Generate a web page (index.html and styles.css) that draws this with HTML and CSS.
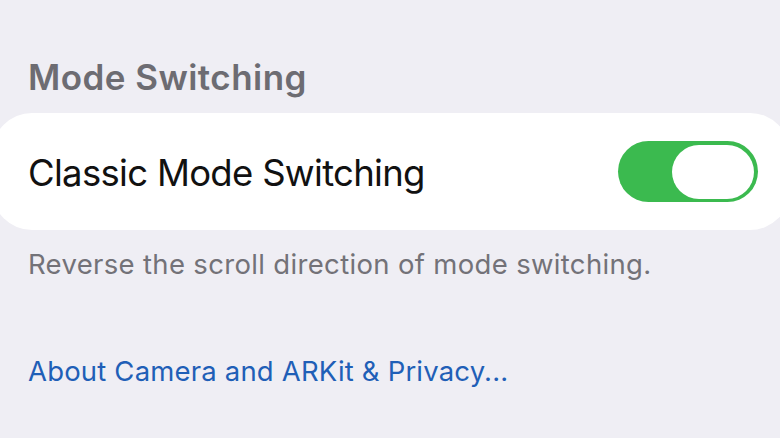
FILE: index.html
```html
<!DOCTYPE html>
<html>
<head>
<meta charset="utf-8">
<link rel="stylesheet" href="styles.css">
</head>
<body>
<div class="page">
  <h2 class="section-title">Mode Switching</h2>
  <div class="card">
    <span class="row-label">Classic Mode Switching</span>
    <div class="toggle"><div class="knob"></div></div>
  </div>
  <p class="footer-note">Reverse the scroll direction of mode switching.</p>
  <a class="privacy-link">About Camera and ARKit &amp; Privacy...</a>
</div>
</body>
</html>
```
FILE: styles.css
```css
html, body {
  margin: 0;
  padding: 0;
  background: #efeef4;
  overflow: hidden;
}
.page {
  width: 780px;
  height: 438px;
  font-family: Inter, "Noto Sans", sans-serif;
  display: flex;
  flex-direction: column;
  align-items: flex-start;
}
.section-title {
  margin: 53px 0 0 28px;
  font-size: 35px;
  line-height: 48px;
  font-weight: 600;
  letter-spacing: 0.45px;
  color: #6d6c72;
}
.card {
  margin: 12px 0 0 -8px;
  width: 798px;
  height: 117px;
  box-sizing: border-box;
  background: #ffffff;
  border-radius: 40px;
  display: flex;
  align-items: center;
  justify-content: space-between;
  padding: 0 32px 0 36px;
}
.row-label {
  font-size: 36.5px;
  line-height: 44px;
  padding-top: 2px;
  letter-spacing: -0.7px;
  color: #111;
  font-weight: 400;
}
.toggle {
  width: 140px;
  height: 61px;
  border-radius: 31px;
  background: #3bba4f;
  display: flex;
  align-items: center;
  justify-content: flex-end;
  padding: 0 4px;
  box-sizing: border-box;
}
.knob {
  width: 82px;
  height: 54px;
  border-radius: 27px;
  background: #fff;
}
.footer-note {
  margin: 16px 0 0 28px;
  font-size: 27.5px;
  line-height: 36px;
  letter-spacing: 0.33px;
  color: #737278;
}
.privacy-link {
  margin: 71px 0 0 28px;
  font-size: 27.5px;
  line-height: 36px;
  letter-spacing: 0.18px;
  color: #1f5fb7;
}
```
